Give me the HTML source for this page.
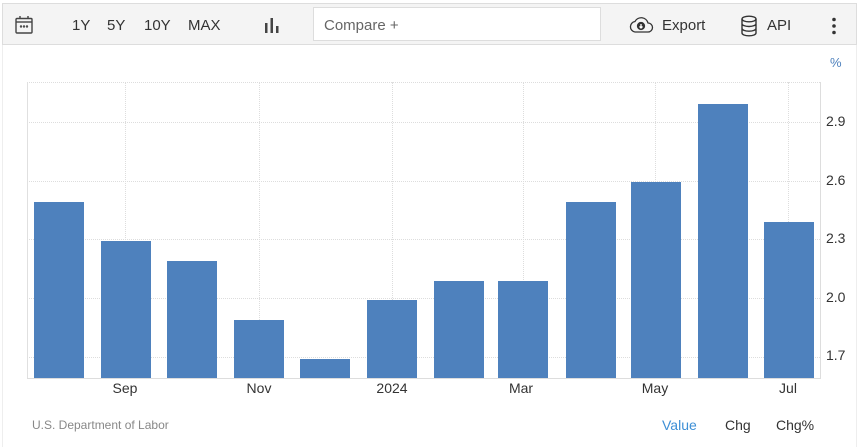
<!DOCTYPE html><html><head><style>
body{margin:0;width:858px;height:447px;background:#fff;font-family:"Liberation Sans",sans-serif;position:relative;overflow:hidden}
.a{position:absolute}
.tb{left:2px;top:3px;width:853px;height:40px;background:#f4f4f4;border:1px solid #ddd}
.t{font-size:15px;color:#333;top:17px}
.b{position:absolute;background:#4e81bd;width:50px;bottom:69px}
.g{position:absolute;left:27px;width:793px;border-top:1px dotted #ddd}
.v{position:absolute;top:82px;height:296px;border-left:1px dotted #ddd}
.y{position:absolute;left:826px;font-size:14px;color:#333}
.x{position:absolute;top:380px;font-size:14px;color:#333;width:60px;text-align:center}
</style></head><body>
<div class="a" style="left:2px;top:44px;width:853px;height:403px;border-left:1px solid #eee;border-right:1px solid #eee"></div>
<div class="a tb"></div>
<svg class="a" style="left:14px;top:15px" width="20" height="20" viewBox="0 0 20 20" fill="none" stroke="#444" stroke-width="1.4"><rect x="2" y="3.5" width="16" height="14.5" rx="1"/><line x1="2" y1="7" x2="18" y2="7"/><line x1="6" y1="1" x2="6" y2="4"/><line x1="14" y1="1" x2="14" y2="4"/><circle cx="7" cy="11.5" r=".5"/><circle cx="10" cy="11.5" r=".5"/><circle cx="13" cy="11.5" r=".5"/></svg>
<div class="a t" style="left:72px">1Y</div><div class="a t" style="left:107px">5Y</div><div class="a t" style="left:144px">10Y</div><div class="a t" style="left:188px">MAX</div>
<svg class="a" style="left:264px;top:17px" width="16" height="16" fill="#444"><rect x="1" y="6" width="2.5" height="10"/><rect x="6.5" y="1" width="2.5" height="15"/><rect x="12" y="9" width="2.5" height="7"/></svg>
<div class="a" style="left:313px;top:7px;width:286px;height:32px;background:#fff;border:1px solid #ddd"></div>
<div class="a t" style="left:324px;color:#666">Compare +</div>
<svg class="a" style="left:628px;top:16px" width="26" height="18" viewBox="0 0 26 18" fill="none" stroke="#333" stroke-width="1.3"><path d="M7 16h13a4.5 4.5 0 0 0 0-9 7 7 0 0 0-13-1.5A5.3 5.3 0 0 0 7 16z"/><circle cx="13" cy="10" r="3.5" fill="#333"/><path d="M13 8v4M11.5 10.5l1.5 1.5 1.5-1.5" stroke="#fff"/></svg>
<div class="a t" style="left:662px">Export</div>
<svg class="a" style="left:740px;top:15px" width="18" height="22" viewBox="0 0 18 22" fill="none" stroke="#333" stroke-width="1.4"><ellipse cx="9" cy="4" rx="7" ry="2.8"/><path d="M2 4v14c0 1.5 3 2.8 7 2.8s7-1.3 7-2.8V4M2 8.7c0 1.5 3 2.8 7 2.8s7-1.3 7-2.8M2 13.4c0 1.5 3 2.8 7 2.8s7-1.3 7-2.8"/></svg>
<div class="a t" style="left:767px">API</div>
<svg class="a" style="left:831px;top:17px" width="6" height="18" fill="#333"><circle cx="3" cy="2.5" r="1.8"/><circle cx="3" cy="9" r="1.8"/><circle cx="3" cy="15.5" r="1.8"/></svg>
<div class="a" style="left:830px;top:55px;font-size:13px;color:#4e81bd">%</div>
<div class="g" style="top:82px"></div><div class="g" style="top:122px"></div><div class="g" style="top:181px"></div><div class="g" style="top:239px"></div><div class="g" style="top:298px"></div><div class="g" style="top:357px"></div>
<div class="v" style="left:125px"></div><div class="v" style="left:259px"></div><div class="v" style="left:392px"></div><div class="v" style="left:523px"></div><div class="v" style="left:655px"></div><div class="v" style="left:788px"></div>
<div class="a" style="left:27px;top:82px;width:1px;height:296px;background:#e0e0e0"></div>
<div class="a" style="left:820px;top:82px;width:1px;height:297px;background:#ddd"></div>
<div class="a" style="left:27px;top:378px;width:794px;height:1px;background:#ddd"></div>
<div class="b" style="left:34px;top:202px"></div><div class="b" style="left:101px;top:241px"></div><div class="b" style="left:167px;top:261px"></div><div class="b" style="left:234px;top:320px"></div><div class="b" style="left:300px;top:359px"></div><div class="b" style="left:367px;top:300px"></div><div class="b" style="left:434px;top:281px"></div><div class="b" style="left:498px;top:281px"></div><div class="b" style="left:566px;top:202px"></div><div class="b" style="left:631px;top:182px"></div><div class="b" style="left:698px;top:104px"></div><div class="b" style="left:764px;top:222px"></div>
<div class="y" style="top:113px">2.9</div><div class="y" style="top:172px">2.6</div><div class="y" style="top:230px">2.3</div><div class="y" style="top:289px">2.0</div><div class="y" style="top:347px">1.7</div>
<div class="x" style="left:95px">Sep</div><div class="x" style="left:229px">Nov</div><div class="x" style="left:362px">2024</div><div class="x" style="left:491px">Mar</div><div class="x" style="left:625px">May</div><div class="x" style="left:758px">Jul</div>
<div class="a" style="left:32px;top:418px;font-size:12px;color:#888">U.S. Department of Labor</div>
<div class="a" style="left:662px;top:417px;font-size:14px;color:#3d8fd6">Value</div>
<div class="a" style="left:725px;top:417px;font-size:14px;color:#333">Chg</div>
<div class="a" style="left:776px;top:417px;font-size:14px;color:#333">Chg%</div>
</body></html>
